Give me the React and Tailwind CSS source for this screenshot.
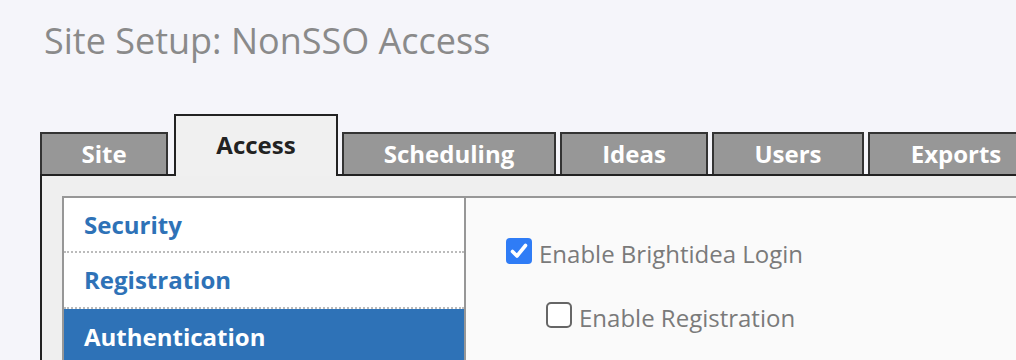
import React from "react";

const font = { fontFamily: '"Open Sans", "Noto Sans", sans-serif' };

function Tab({ label, w, active }) {
  if (active) {
    return (
      <div
        className={`relative z-10 -mb-[2px] h-[62px] ${w} shrink-0 border-2 border-b-0 border-[#222] bg-[#f0f0f0] flex items-start justify-center pt-[11px] text-[24px] leading-[36px] font-bold text-[#222]`}
      >
        {label}
      </div>
    );
  }
  return (
    <div
      className={`h-[42px] ${w} shrink-0 border-2 border-b-0 border-[#333] bg-[#979797] flex items-center justify-center text-[24px] leading-[36px] font-bold text-white`}
    >
      {label}
    </div>
  );
}

function Check({ checked }) {
  if (checked) {
    return (
      <span className="mt-[2px] w-[26px] h-[26px] rounded-[4px] bg-[#2f7cf6] flex items-center justify-center shrink-0">
        <svg width="26" height="26" viewBox="0 0 26 26" fill="none">
          <path d="M6.5 13.5 L11 18 L19.5 7.5" stroke="white" strokeWidth="3.6" strokeLinecap="round" strokeLinejoin="round" />
        </svg>
      </span>
    );
  }
  return <span className="mt-[2px] w-[26px] h-[26px] rounded-[5px] border-2 border-[#666] bg-white shrink-0" />;
}

export default function App() {
  return (
    <div className="w-[1016px] h-[360px] overflow-hidden bg-[#f5f5fa]" style={font}>
      <div className="pt-[19px] pl-[44px] text-[36px] leading-[44px] text-[#8a8a8a]">
        Site Setup: NonSSO Access
      </div>
      <div className="mt-[51px] pl-[40px] flex items-end">
        <Tab label="Site" w="w-[128px]" />
        <div className="w-[6px] shrink-0" />
        <Tab label="Access" w="w-[164px]" active />
        <div className="w-[4px] shrink-0" />
        <Tab label="Scheduling" w="w-[214px]" />
        <div className="w-[4px] shrink-0" />
        <Tab label="Ideas" w="w-[148px]" />
        <div className="w-[4px] shrink-0" />
        <Tab label="Users" w="w-[152px]" />
        <div className="w-[4px] shrink-0" />
        <Tab label="Exports" w="w-[176px]" />
      </div>
      <div className="ml-[40px] border-l-2 border-t-2 border-[#222] bg-[#efefef] pl-[20px] pt-[20px] h-[200px]">
        <div className="flex border-2 border-r-0 border-[#979797] h-[200px]">
          <div className="w-[402px] shrink-0 bg-white border-r-2 border-[#979797]">
            <div className="h-[55px] border-b-2 border-dotted border-[#bbb] flex items-center pl-[20px] text-[24px] leading-[36px] font-bold text-[#2e72b7]">
              Security
            </div>
            <div className="h-[56px] border-b-2 border-dotted border-[#bbb] flex items-center pl-[20px] text-[24px] leading-[36px] font-bold text-[#2e72b7]">
              Registration
            </div>
            <div className="h-[56px] bg-[#2e72b7] flex items-center pl-[20px] text-[24px] leading-[36px] font-bold text-white">
              Authentication
            </div>
          </div>
          <div className="flex-1 bg-[#fafafa] pl-[40px] pt-[38px]">
            <label className="flex items-start gap-[7px] text-[24px] leading-[36px] text-[#7a7a7a]">
              <Check checked />
              <span>Enable Brightidea Login</span>
            </label>
            <label className="mt-[28px] ml-[40px] flex items-start gap-[7px] text-[24px] leading-[36px] text-[#7a7a7a]">
              <Check />
              <span>Enable Registration</span>
            </label>
          </div>
        </div>
      </div>
    </div>
  );
}
